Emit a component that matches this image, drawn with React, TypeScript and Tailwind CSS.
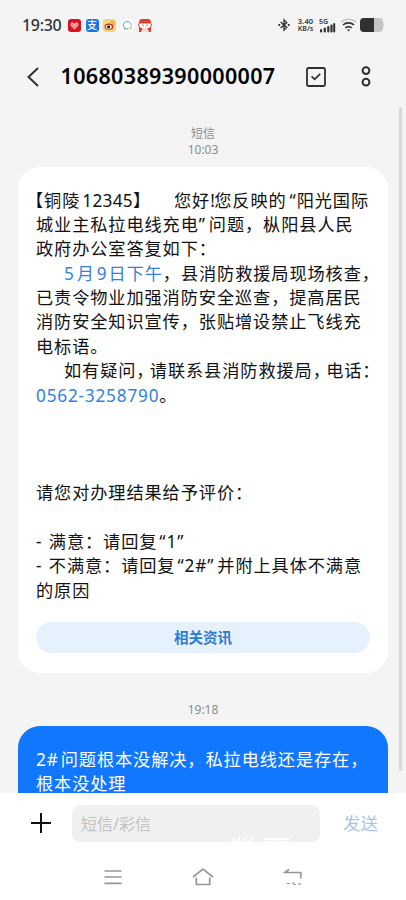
import type { ReactNode } from 'react';

function Gap({ className }: { className: string }) {
  return <i className={`inline-block ${className}`} />;
}

function Line({ children }: { children?: ReactNode }) {
  return <p className="h-[24.4px] whitespace-nowrap">{children}</p>;
}

// half-width comma used between short clauses
function Comma() {
  return <span className="mr-[4px] [font-feature-settings:'halt']">，</span>;
}

function AppBadges() {
  return (
    <div className="flex gap-[4.6px]">
      <svg className="w-[13px] h-[13px]" viewBox="0 0 13 13">
        <rect width="13" height="13" rx="3" fill="#d9121d" />
        <path d="M6.5 10.4 3 7C1.6 5.2 3.4 2.8 5.2 3.8l1.3.9 1.3-.9C9.6 2.8 11.4 5.2 10 7Z" fill="#f7b9b9" />
        <path d="m3.5 5 2 1.5M9.5 5l-2 1.5M4.8 8h3.4" stroke="#d9121d" strokeWidth=".6" />
      </svg>
      <div className="w-[13px] h-[13px] rounded-[3px] bg-[#1f73e8] text-white text-[10px] leading-[13px] text-center font-medium">支</div>
      <svg className="w-[13px] h-[13px]" viewBox="0 0 13 13">
        <rect width="13" height="13" rx="3" fill="#fbd373" />
        <ellipse cx="6" cy="7.6" rx="4.4" ry="3.2" fill="#c8321f" />
        <ellipse cx="5.7" cy="7.8" rx="3" ry="2.1" fill="#fff" />
        <circle cx="5.6" cy="7.8" r="1.6" fill="#222" />
        <path d="M8 2.8c2-.4 3.4 1 3 3" fill="none" stroke="#e0662a" strokeWidth="1" />
      </svg>
      <svg className="w-[13px] h-[13px]" viewBox="0 0 13 13">
        <rect width="13" height="13" rx="3" fill="#fff" />
        <path d="M7.4 9.8a4 3.7 0 1 1 2.8-3.5" fill="none" stroke="#4b9be0" strokeWidth="1" />
        <path d="m3 10.3 1.5-1.1" stroke="#4b9be0" strokeWidth="1" />
        <path d="m8.2 8.4 2 1.6" stroke="#8bc34a" strokeWidth="1.2" />
        <circle cx="10.3" cy="7.8" r=".8" fill="#f0b740" />
      </svg>
      <svg className="w-[14px] h-[13px]" viewBox="0 0 14 13">
        <path d="M1 3.5Q1 0 4 0h6q3 0 3 3.5L14 6l-1 2v5H1V8L0 6Z" fill="#dd4030" />
        <path d="M1.5 4.5h11l.5 2.2-2 2.3H3L1 6.7Z" fill="#fff" />
        <path d="M4.5 9h5l1.5 4H3Z" fill="#f7dcd6" />
        <circle cx="5" cy="6.2" r=".6" fill="#55302c" />
        <circle cx="9" cy="6.2" r=".6" fill="#55302c" />
      </svg>
    </div>
  );
}

function StatusBar() {
  return (
    <div className="h-[50px] flex items-center pl-[22px] pr-[22px] text-[#333]">
      <span className="w-[46px] text-[16px] font-medium tracking-[-0.3px] leading-5">19:30</span>
      <AppBadges />
      <div className="ml-auto flex items-center">
        <svg className="w-[12px] h-[14px]" viewBox="0 0 12 14" fill="none" stroke="currentColor" strokeWidth="1.3">
          <path d="m2.6 4 6.2 5.4L6 12.2V1.8l2.8 2.8L2.6 10" />
          <path d="M.4 7h1.8M9.8 7h1.8" strokeWidth="1.8" />
        </svg>
        <div className="ml-[6px] w-[19px] text-center text-[7.5px] leading-[7.5px] font-semibold">
          <div className="tracking-[0.2px]">3.40</div>
          <div className="text-[7px]">KB/s</div>
        </div>
        <svg className="ml-[4px] w-[17px] h-[15px] font-semibold" viewBox="0 0 17 15" fill="currentColor">
          <text x="0" y="6" fontSize="7">5G</text>
          <rect x="1" y="11" width="2.2" height="3.5" rx="1" />
          <rect x="4.7" y="9.5" width="2.2" height="5" rx="1" />
          <rect x="8.2" y="8" width="2.2" height="6.5" rx="1" />
          <rect x="11.4" y="6.5" width="2.2" height="8" rx="1" />
          <rect x="14.2" y="5" width="2" height="9.5" rx="1" />
        </svg>
        <svg className="ml-[4px] w-[17px] h-[14px]" viewBox="0 0 17 14" fill="none" stroke="currentColor" strokeWidth="1.7">
          <path d="M1 4.2a11 11 0 0 1 15 0" stroke="#c8c8c8" />
          <path d="M3 7a8 8 0 0 1 11 0" />
          <path d="M5.3 9.9a5 5 0 0 1 6.4 0" />
          <path d="M6.8 11.4h3.4l-1.7 2Z" fill="currentColor" stroke="none" />
        </svg>
        <svg className="ml-[3px] w-[24px] h-[14px]" viewBox="0 0 24 14">
          <rect width="23" height="14" rx="4" fill="#c5c5c5" />
          <path d="M23 4q1.5 3 0 6Z" fill="#c5c5c5" />
          <path d="M14 0v14H4q-4 0-4-4V4q0-4 4-4Z" fill="#303030" />
        </svg>
      </div>
    </div>
  );
}

function Header() {
  return (
    <header className="h-[53px] flex items-center pl-[27px] pr-[35px]">
      <svg className="w-[12px] h-[20px]" viewBox="0 0 12 20" fill="none" stroke="#303030" strokeWidth="2">
        <path d="M11 1 1.5 10 11 19" />
      </svg>
      <h1 className="ml-[21.5px] w-[216px] whitespace-nowrap text-[21.5px] font-semibold tracking-[0.35px] text-black">
        10680389390000007
      </h1>
      <svg className="ml-auto w-[20px] h-[20px]" viewBox="0 0 20 20" fill="none" stroke="#303030">
        <rect x="1" y="1" width="18" height="18" rx="1.5" strokeWidth="1.8" />
        <path d="m5.6 9.4 3 3 5.6-5.6" strokeWidth="1.7" />
      </svg>
      <svg className="ml-[35px] w-[10px] h-[21px]" viewBox="0 0 10 21" fill="none" stroke="#303030" strokeWidth="2">
        <circle cx="5" cy="4.6" r="3.4" />
        <circle cx="5" cy="16.2" r="3.4" />
      </svg>
    </header>
  );
}

function IncomingMessage() {
  return (
    <div className="mx-[18px] mt-[9px] h-[506px] rounded-[22px] bg-white px-[18px] pt-[21.5px] text-[17.2px] leading-[24.4px] tracking-[0.9px] text-[#111]">
      <Line>
        <span className="-ml-[10px]">【铜陵</span>
        <Gap className="w-[2px]" />
        <span className="tracking-[0.3px]">12345</span>】
        <Gap className="w-[23px]" />
        您好<span className="tracking-[-0.6px]">!</span>您反映的
        <Gap className="w-[3px]" />“阳光国际
      </Line>
      <Line>城业主私拉电线充电”<Gap className="w-[3px]" />问题，枞阳县人民</Line>
      <Line>政府办公室答复如下：</Line>
      <Line>
        <Gap className="w-[28px]" />
        <span className="text-[#3381dc]">
          5<Gap className="w-[2px]" />月<Gap className="w-[2px]" />9<Gap className="w-[1px]" />日下午
        </span>
        ，县消防救援局现场核查，
      </Line>
      <Line>已责令物业加强消防安全巡查，提高居民</Line>
      <Line>消防安全知识宣传，张贴增设禁止飞线充</Line>
      <Line>电标语。</Line>
      <Line>
        <Gap className="w-[28px]" />
        如有疑问<Comma />请联系县消防救援局<Comma />电话：
      </Line>
      <Line>
        <span className="tracking-[0.8px] text-[#3381dc]">0562-3258790</span>。
      </Line>
      <Line />
      <Line />
      <Line />
      <Line>请您对办理结果给予评价：</Line>
      <Line />
      <Line>-<Gap className="w-[1px]" /> 满意：请回复<Gap className="w-[2px]" />“1”</Line>
      <Line>-<Gap className="w-[1px]" /> 不满意：请回复<Gap className="w-[2px]" />“2#”<Gap className="w-[3px]" />并附上具体不满意</Line>
      <Line>的原因</Line>
      <button className="mt-[19px] block h-[31px] w-full rounded-full bg-[#e5f1fd] text-[14.5px] leading-[31px] font-semibold tracking-normal text-[#2f7bd3]">
        相关资讯
      </button>
    </div>
  );
}

function OutgoingMessage() {
  return (
    <div className="mx-[18px] mt-[8px] h-[110px] rounded-[22px] bg-[#1177ff] px-[18px] pt-[22px] text-[17.2px] leading-[24.4px] tracking-[0.9px] text-white">
      <Line>2#<Gap className="w-[2px]" />问题根本没解决，私拉电线还是存在，</Line>
      <Line>根本没处理</Line>
    </div>
  );
}

function Composer() {
  return (
    <div className="h-[60px] flex items-center pl-[31px] pr-[28px]">
      <svg className="w-[20px] h-[20px]" viewBox="0 0 20 20" stroke="#111" strokeWidth="2">
        <path d="M0 10h20M10 0v20" />
      </svg>
      <div className="relative ml-[21px] h-[37px] w-[248px] rounded-[8px] bg-[#f0f0f0] pl-[9px] text-[16px] leading-[39px] text-[#c3c3c3]">
        短信/彩信
        <svg className="absolute left-[158px] top-[32px] w-[64px] h-[8px]" viewBox="0 0 64 8" fill="none" stroke="#fff" strokeWidth="1.6">
          <path d="m3 1 2 3M9 0v4M16 0l-2 4M22 0l-2 4M1 5h22M34 2h25M33 5h26M46 2v5" />
        </svg>
      </div>
      <span className="ml-auto pt-[1px] text-[17.5px] text-[#a6c6ee]">发送</span>
    </div>
  );
}

function NavBar() {
  return (
    <nav className="h-[47px] flex items-center pl-[104px] pr-[104px] justify-between">
      <svg className="w-[18px] h-[16px]" viewBox="0 0 18 16" stroke="#969696" strokeWidth="1.7">
        <path d="M.5 2h17M.5 8h17M.5 14.3h17" />
      </svg>
      <svg className="w-[22px] h-[18px]" viewBox="0 0 22 18" fill="none" stroke="#969696" strokeWidth="1.7" strokeLinejoin="round">
        <path d="m1 9 10-7.8L21 9M4.3 9.5v7h13.4v-7" />
      </svg>
      <svg className="w-[19px] h-[18px]" viewBox="0 0 19 18" fill="none" stroke="#969696" strokeWidth="1.7">
        <path d="M6 1.5 1.8 4.5H17.8v6" />
        <path d="M4 15.5h3M9.5 16l2-1.5M11 16.5h2M15 15.8h3" strokeWidth="1.2" />
      </svg>
    </nav>
  );
}

export default function App() {
  return (
    <div className="relative h-[900px] w-[406px] flex flex-col overflow-hidden bg-[#f4f4f4] font-['Noto_Sans','Noto_Sans_CJK_SC',sans-serif]">
      <StatusBar />
      <Header />
      <main className="h-[690px] overflow-hidden">
        <div className="pt-[23px] text-center text-[12px] leading-[16px] text-[#8d8d8d]">
          <div>短信</div>
          <div>10:03</div>
        </div>
        <IncomingMessage />
        <div className="mt-[28px] text-center text-[12px] leading-[17px] text-[#8d8d8d]">19:18</div>
        <OutgoingMessage />
      </main>
      <footer className="flex-1 bg-white">
        <Composer />
        <NavBar />
      </footer>
      <div className="absolute left-[399px] top-[107px] h-[664px] w-[3px] rounded-full bg-[#d9d9d9]" />
    </div>
  );
}
